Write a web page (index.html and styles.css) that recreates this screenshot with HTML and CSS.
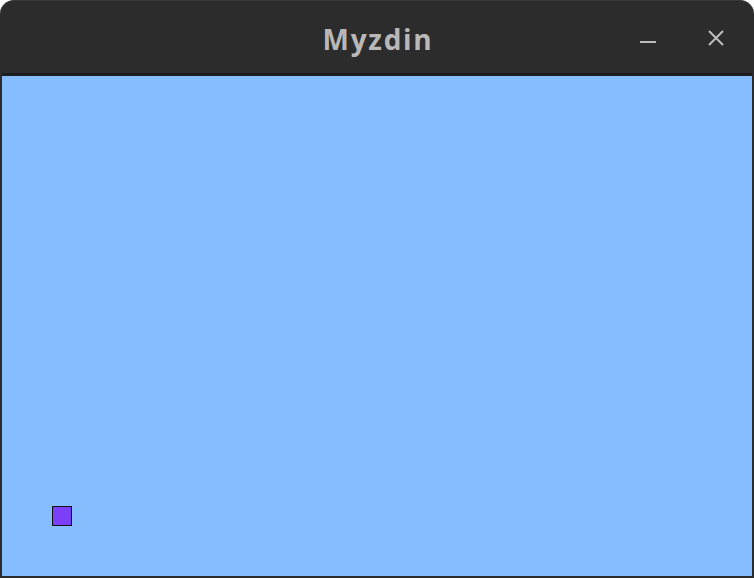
FILE: index.html
```html
<!DOCTYPE html>
<html>
<head>
<meta charset="utf-8">
<link rel="stylesheet" href="styles.css">
</head>
<body>
<div class="window">
  <div class="titlebar">
    <div class="title">Myzdin</div>
    <div class="controls">
      <svg class="btn" width="16" height="16" viewBox="0 0 16 16"><rect x="0" y="11" width="16" height="2" fill="#bdbdbd"/></svg>
      <svg class="btn" width="16" height="16" viewBox="0 0 16 16"><path d="M1 1 L15 15 M15 1 L1 15" stroke="#bdbdbd" stroke-width="2" fill="none"/></svg>
    </div>
  </div>
  <div class="canvas">
    <div class="square"></div>
  </div>
</div>
</body>
</html>
```
FILE: styles.css
```css
html, body {
  margin: 0;
  padding: 0;
  background: #ffffff;
}
.window {
  width: 754px;
  height: 578px;
  box-sizing: border-box;
  background: #2c2c2c;
  border-radius: 14px 14px 0 0;
  border-top: 1px solid #383838;
  padding: 0 2px 2px 2px;
  display: flex;
  flex-direction: column;
}
.titlebar {
  height: 72px;
  border-bottom: 3px solid #1d1d1d;
  position: relative;
  display: flex;
  align-items: center;
  justify-content: center;
}
.title {
  font-family: "Open Sans", "DejaVu Sans", sans-serif;
  font-weight: 700;
  font-size: 28px;
  color: #b8b8b8;
  letter-spacing: 1.7px;
  margin-left: 2px;
  margin-top: 3px;
}
.controls {
  position: absolute;
  right: 28px;
  top: 29px;
  display: flex;
  gap: 52px;
}
.btn {
  display: block;
}
.canvas {
  flex: 1;
  background: #86bdfe;
  position: relative;
}
.square {
  position: absolute;
  left: 50px;
  top: 430px;
  width: 18px;
  height: 18px;
  background: #7a3ff6;
  border: 1px solid #111111;
}
```
